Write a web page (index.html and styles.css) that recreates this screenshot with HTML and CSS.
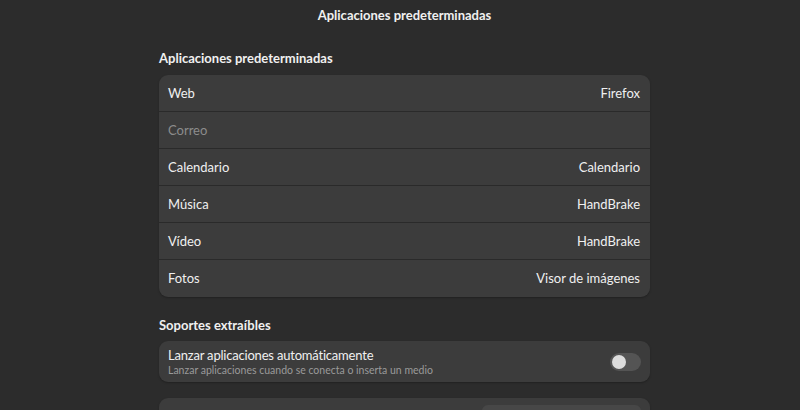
FILE: index.html
```html
<!DOCTYPE html>
<html lang="es">
<head>
<meta charset="utf-8">
<title>Aplicaciones predeterminadas</title>
<link rel="stylesheet" href="styles.css">
</head>
<body>
<header class="topbar"><h1 class="topbar-title">Aplicaciones predeterminadas</h1></header>
<main class="content">
  <h2 class="section-title">Aplicaciones predeterminadas</h2>
  <div class="card card-list">
    <div class="row"><span class="row-label">Web</span><span class="row-value">Firefox</span></div>
    <div class="row"><span class="row-label dim">Correo</span><span class="row-value"></span></div>
    <div class="row"><span class="row-label">Calendario</span><span class="row-value">Calendario</span></div>
    <div class="row"><span class="row-label">Música</span><span class="row-value">HandBrake</span></div>
    <div class="row"><span class="row-label">Vídeo</span><span class="row-value">HandBrake</span></div>
    <div class="row"><span class="row-label">Fotos</span><span class="row-value">Visor de imágenes</span></div>
  </div>
  <h2 class="section-title second">Soportes extraíbles</h2>
  <div class="card">
    <div class="row row-tall">
      <div class="row-text">
        <span class="row-label tight">Lanzar aplicaciones automáticamente</span>
        <span class="row-sub">Lanzar aplicaciones cuando se conecta o inserta un medio</span>
      </div>
      <span class="switch"><span class="knob"></span></span>
    </div>
  </div>
  <div class="card card-next">
    <div class="row row-next"><span class="row-label"></span><span class="dropdown"></span></div>
  </div>
</main>
</body>
</html>
```
FILE: styles.css
```css
html, body {
  margin: 0;
  padding: 0;
  background: #2c2c2c;
  height: 410px;
  overflow: hidden;
}
body {
  font-family: Lato, "Noto Sans", sans-serif;
  color: #f0f0f0;
  font-size: 13px;
}
.topbar {
  padding-left: 9px;
  height: 30px;
  display: flex;
  align-items: center;
  justify-content: center;
}
.topbar-title {
  margin: 0;
  font-size: 13px;
  font-weight: 700;
  line-height: 16px;
}
.content {
  width: 491px;
  margin-left: 159px;
  padding-top: 20px;
}
.section-title {
  margin: 0 0 9px 0;
  font-size: 13px;
  font-weight: 700;
  line-height: 16px;
}
.section-title.second {
  margin-top: 20px;
  margin-bottom: 8px;
}
.card {
  background: #3c3c3c;
  border-radius: 9px;
  overflow: hidden;
  box-shadow: 0 1px 2px rgba(0,0,0,0.25);
}
.card-list {
  padding-bottom: 1px;
}
.row {
  height: 36px;
  display: flex;
  align-items: center;
  justify-content: space-between;
  padding: 0 10px 0 9px;
  border-top: 1px solid #2a2a2a;
}
.row:first-child { border-top: none; }
.row-label { line-height: 16px; }
.row-label.tight { letter-spacing: -0.2px; }
.row-label.dim { color: #8c8c8c; }
.row-value { line-height: 16px; }
.row-tall { height: 41px; }
.row-text {
  display: flex;
  flex-direction: column;
  padding-top: 1px;
}
.row-sub {
  font-size: 10.5px;
  color: #9a9a9a;
  line-height: 14px;
}
.switch {
  width: 31px;
  height: 18px;
  border-radius: 9px;
  background: #545454;
  display: flex;
  align-items: center;
  padding-left: 2px;
  box-sizing: border-box;
  margin-right: -1px;
}
.knob {
  width: 14px;
  height: 14px;
  border-radius: 50%;
  background: #dcdcdc;
}
.card-next {
  margin-top: 16px;
}
.row-next {
  height: 40px;
  align-items: flex-start;
  padding-top: 7px;
  box-sizing: border-box;
}
.dropdown {
  width: 159px;
  height: 30px;
  border-radius: 6px;
  background: #474747;
  margin-right: -1px;
}
```
